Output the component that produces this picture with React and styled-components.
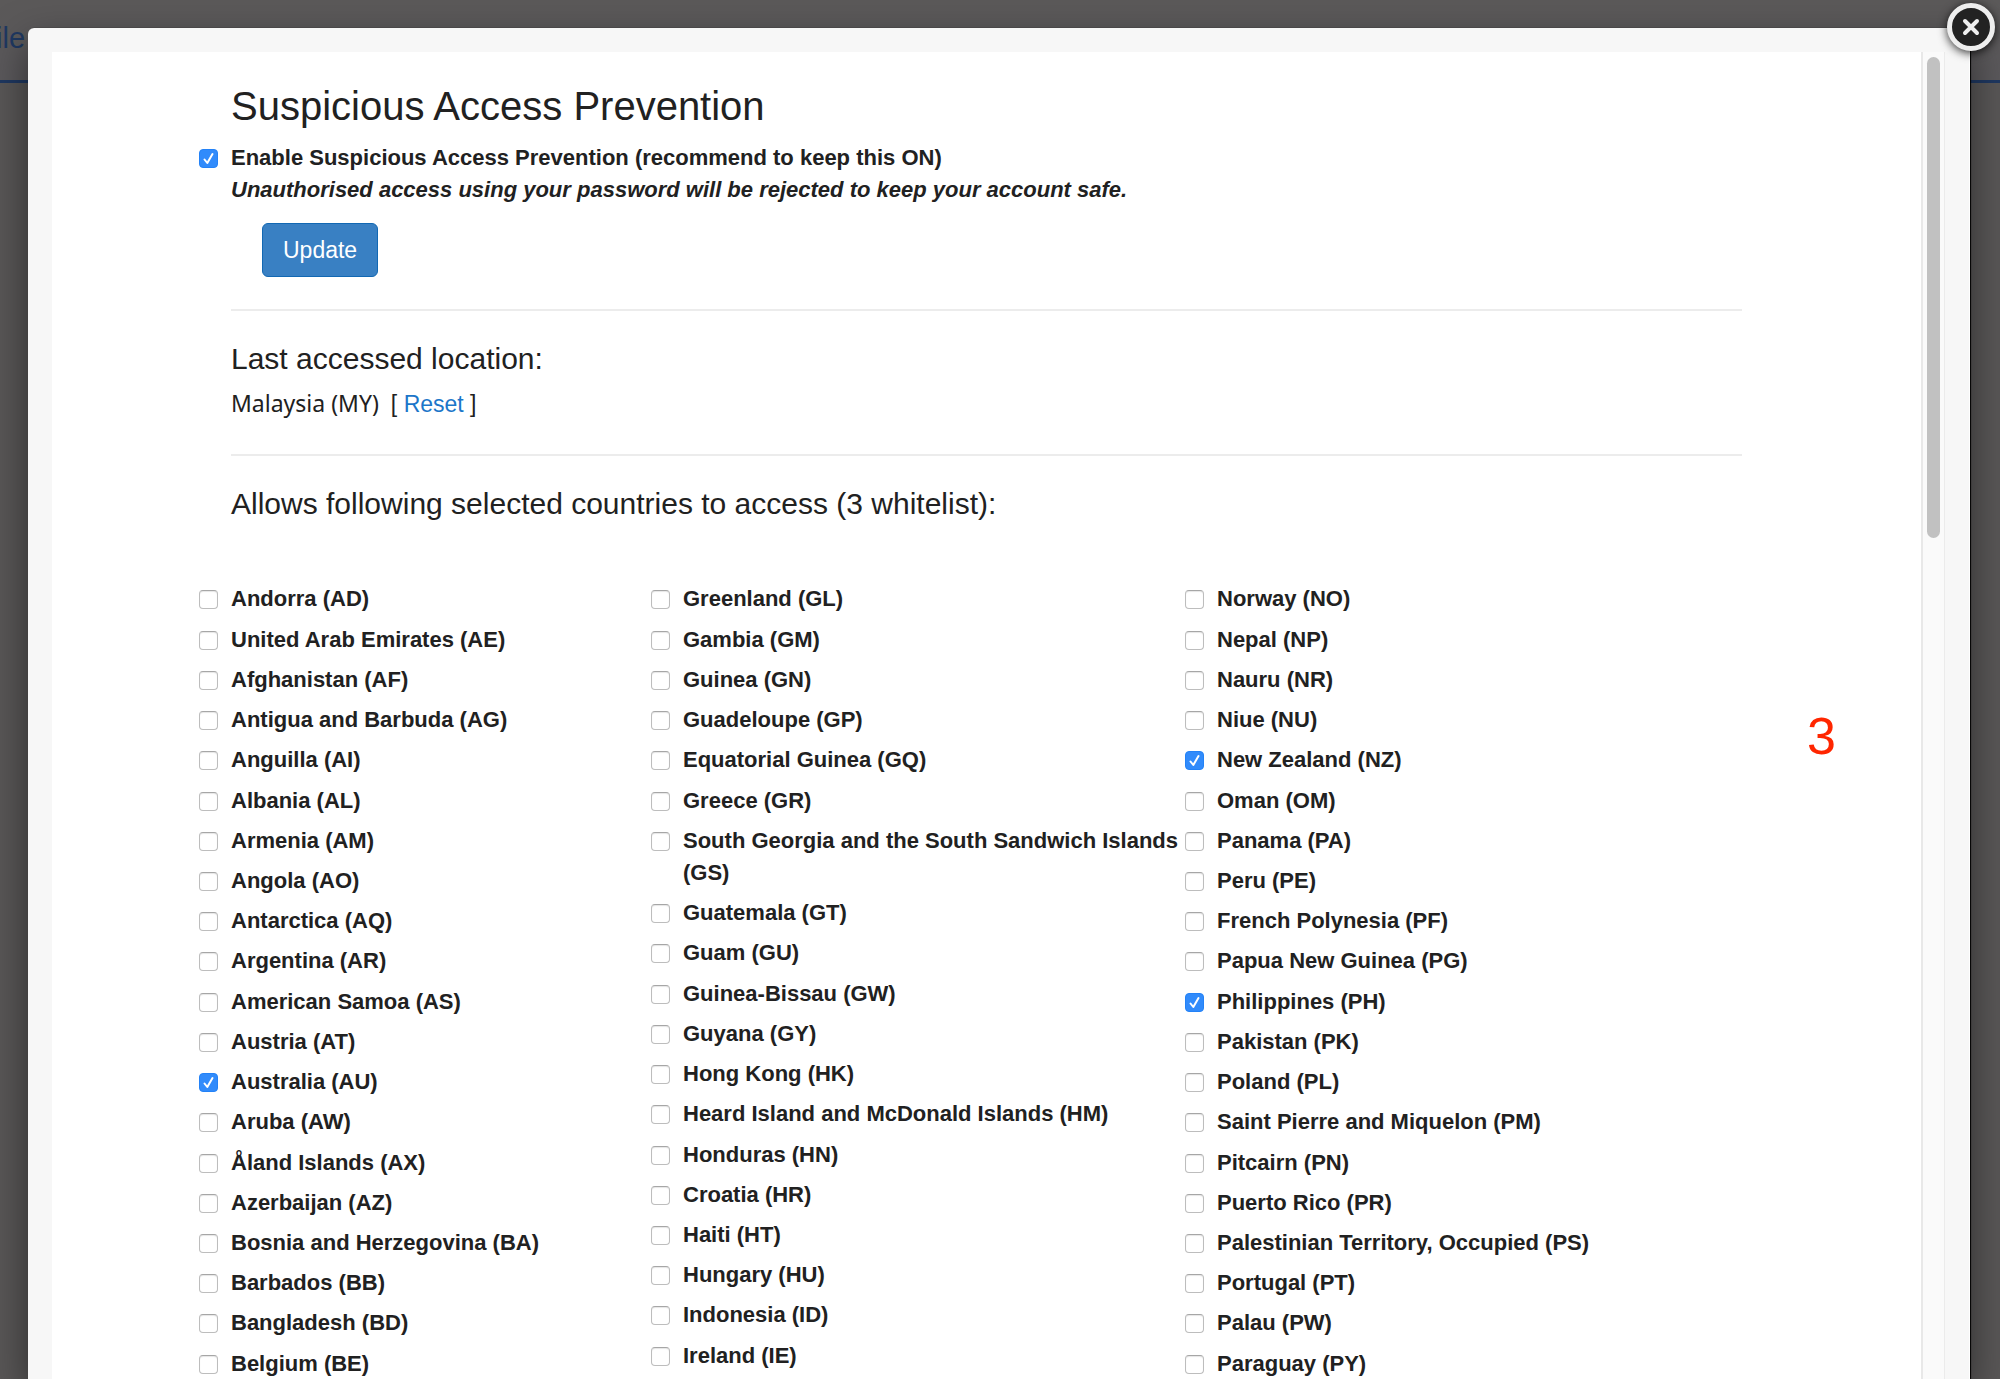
import React from "react";
import styled, { createGlobalStyle } from "styled-components";

const Global = createGlobalStyle`
  * { box-sizing: border-box; }
  body {
    margin: 0;
    background: #595757;
    color: #212121;
    font-family: "Liberation Sans", Arial, sans-serif;
    font-size: 23px;
    line-height: 1.4;
  }
`;

const Page = styled.div`
  display: grid;
  height: 100vh;
  overflow: hidden;
`;

const Backdrop = styled.div`
  grid-area: 1 / 1;
`;

const SiteHeader = styled.header`
  display: flex;
  height: 83px;
  padding-top: 18px;
  border-bottom: 3px solid #1f3861;
  background: linear-gradient(#5b5959, #5b595c);
`;

const SiteLink = styled.a`
  margin-left: -4px;
  color: #1f3861;
  font-size: 29px;
  line-height: 40px;
  text-decoration: none;
`;

const Dialog = styled.section`
  grid-area: 1 / 1;
  position: relative;
  display: flex;
  min-height: 0;
  margin: 28px 30px 0 28px;
  padding: 24px 24px 0;
  border-right: 1px solid #ffffff;
  border-radius: 6px 6px 0 0;
  background: #f7f7f7;
  box-shadow: 0 16px 40px rgba(0, 0, 0, 0.5), 1px 0 1px #000000;
`;

const CloseButton = styled.button`
  position: absolute;
  top: -25px;
  right: -26px;
  display: grid;
  place-items: center;
  width: 48px;
  height: 48px;
  padding: 0;
  border: 5px solid #eeeeee;
  border-radius: 50%;
  background: #222222;
  box-shadow: 0 2px 10px rgba(0, 0, 0, 0.8);
  cursor: pointer;
`;

const Panel = styled.main`
  position: relative;
  flex: 1;
  min-width: 0;
  overflow: hidden;
  padding: 32px 179px 0;
  background: #ffffff;
`;

const Track = styled.div`
  width: 24px;
  padding: 5px 4px;
  border-left: 2px solid #e8e8e8;
  border-right: 1px solid #ebebeb;
  background: #fafafa;
`;

const Thumb = styled.div`
  width: 13px;
  height: 36.5%;
  border-radius: 7px;
  background: #c1c1c1;
`;

const Title = styled.h1`
  margin: 0 0 14px;
  font-size: 40px;
  font-weight: 400;
  line-height: 44px;
`;

const Heading = styled.h2`
  margin: 0 0 12px;
  font-size: 30px;
  font-weight: 400;
  line-height: 32px;
`;

const Divider = styled.hr`
  margin: 32px 0;
  border: 0;
  border-top: 2px solid #ececec;
`;

const Label = styled.label`
  display: flex;
  margin-left: -32px;
  font-size: 22px;
  font-weight: 700;
  line-height: 1.465;
`;

const BoxCell = styled.span`
  display: grid;
  flex: none;
  width: 32px;
  padding-top: 7px;

  > * {
    grid-area: 1 / 1;
  }
`;

const Box = styled.input`
  appearance: none;
  width: 19px;
  height: 19px;
  margin: 0;
  border: 1px solid #bdbdbd;
  border-top-color: #a6a6a6;
  border-radius: 4px;
  background: #ffffff;
  box-shadow: inset 0 1px 1px rgba(0, 0, 0, 0.1);

  &:checked {
    border-color: #2382f7;
    background: #318bfb;
    box-shadow: none;
  }
`;

const Tick = styled.svg`
  width: 19px;
  height: 19px;
  pointer-events: none;
`;

const UpdateButton = styled.button`
  display: block;
  margin: 17px 0 0 31px;
  padding: 0 20px;
  height: 54px;
  border: 1px solid #1268b3;
  border-radius: 6px;
  background: #3980c3;
  color: #ffffff;
  font: inherit;
  cursor: pointer;
`;

const Location = styled.p`
  margin: 0 0 34px;
  line-height: 32px;
`;

const Place = styled.span`
  margin-right: 12px;
  font-family: "Noto Sans", sans-serif;
`;

const Reset = styled.a`
  color: #1c76c9;
  text-decoration: none;
`;

const Countries = styled.div`
  display: grid;
  grid-template-columns: 452fr 534fr 525fr;
  margin-top: 63px;
`;

const Column = styled.ul`
  display: flex;
  flex-direction: column;
  gap: 8px;
  margin: 0;
  padding: 0;
  list-style: none;
`;

const Note = styled.span`
  position: absolute;
  top: 648px;
  right: 85px;
  color: #ff2600;
  font-size: 52px;
`;

const columns = [
  [
    "Andorra (AD)", "United Arab Emirates (AE)", "Afghanistan (AF)", "Antigua and Barbuda (AG)",
    "Anguilla (AI)", "Albania (AL)", "Armenia (AM)", "Angola (AO)", "Antarctica (AQ)",
    "Argentina (AR)", "American Samoa (AS)", "Austria (AT)", "Australia (AU)", "Aruba (AW)",
    "Åland Islands (AX)", "Azerbaijan (AZ)", "Bosnia and Herzegovina (BA)", "Barbados (BB)",
    "Bangladesh (BD)", "Belgium (BE)",
  ],
  [
    "Greenland (GL)", "Gambia (GM)", "Guinea (GN)", "Guadeloupe (GP)", "Equatorial Guinea (GQ)",
    "Greece (GR)", "South Georgia and the South Sandwich Islands (GS)", "Guatemala (GT)",
    "Guam (GU)", "Guinea-Bissau (GW)", "Guyana (GY)", "Hong Kong (HK)",
    "Heard Island and McDonald Islands (HM)", "Honduras (HN)", "Croatia (HR)", "Haiti (HT)",
    "Hungary (HU)", "Indonesia (ID)", "Ireland (IE)",
  ],
  [
    "Norway (NO)", "Nepal (NP)", "Nauru (NR)", "Niue (NU)", "New Zealand (NZ)", "Oman (OM)",
    "Panama (PA)", "Peru (PE)", "French Polynesia (PF)", "Papua New Guinea (PG)",
    "Philippines (PH)", "Pakistan (PK)", "Poland (PL)", "Saint Pierre and Miquelon (PM)",
    "Pitcairn (PN)", "Puerto Rico (PR)", "Palestinian Territory, Occupied (PS)",
    "Portugal (PT)", "Palau (PW)", "Paraguay (PY)",
  ],
];

const allowed = new Set(["Australia (AU)", "New Zealand (NZ)", "Philippines (PH)"]);

function Checkbox({ initial = false, children }) {
  const [on, setOn] = React.useState(initial);
  return (
    <Label>
      <BoxCell>
        <Box type="checkbox" checked={on} onChange={(e) => setOn(e.target.checked)} />
        {on && (
          <Tick viewBox="0 0 19 19" fill="none" stroke="#fff" strokeWidth="2" strokeLinecap="round" strokeLinejoin="round">
            <path d="M5.5 10.5 8.3 14 13.5 5" />
          </Tick>
        )}
      </BoxCell>
      <span>{children}</span>
    </Label>
  );
}

export default function App() {
  return (
    <Page>
      <Global />
      <Backdrop>
        <SiteHeader>
          <SiteLink href="#">ile</SiteLink>
        </SiteHeader>
      </Backdrop>
      <Dialog role="dialog" aria-labelledby="dialog-title">
        <Panel>
          <Title id="dialog-title">Suspicious Access Prevention</Title>
          <Checkbox initial>
            Enable Suspicious Access Prevention (recommend to keep this ON)
            <br />
            <em>Unauthorised access using your password will be rejected to keep your account safe.</em>
          </Checkbox>
          <UpdateButton type="button">Update</UpdateButton>
          <Divider />
          <Heading>Last accessed location:</Heading>
          <Location>
            <Place>Malaysia (MY)</Place>[ <Reset href="#">Reset</Reset> ]
          </Location>
          <Divider />
          <Heading>Allows following selected countries to access (3 whitelist):</Heading>
          <Countries>
            {columns.map((names) => (
              <Column key={names[0]}>
                {names.map((name) => (
                  <li key={name}>
                    <Checkbox initial={allowed.has(name)}>{name}</Checkbox>
                  </li>
                ))}
              </Column>
            ))}
          </Countries>
          <Note>3</Note>
        </Panel>
        <Track>
          <Thumb />
        </Track>
        <CloseButton type="button" aria-label="Close">
          <svg width="20" height="20" viewBox="0 0 20 20" stroke="#eee" strokeWidth="4" strokeLinecap="round">
            <path d="M4 4 16 16M16 4 4 16" />
          </svg>
        </CloseButton>
      </Dialog>
    </Page>
  );
}
